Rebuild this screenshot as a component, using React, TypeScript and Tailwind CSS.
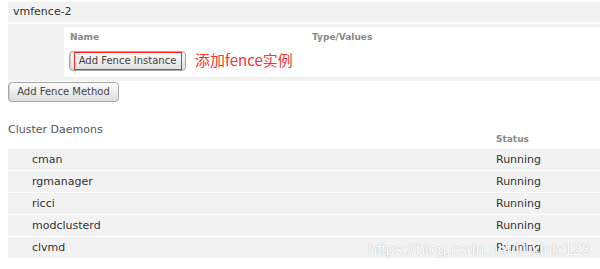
import React from "react";

const daemons = ["cman", "rgmanager", "ricci", "modclusterd", "clvmd"];

const btn =
  "relative h-[20px] rounded-[4px] border border-[#a8a8a8] bg-gradient-to-b from-[#fcfcfc] to-[#dedede] text-[10px] leading-[18px] text-[#444] shadow-[inset_1px_0_0_#cccccc]";

export default function App() {
  return (
    <div
      className="relative h-[269px] w-[600px] overflow-hidden bg-white pl-[8px] pt-[2px]"
      style={{ fontFamily: '"DejaVu Sans", sans-serif' }}
    >
      <div className="flex h-[20px] items-center bg-[#f2f2f2] pl-[5px] text-[11px] leading-[20px] text-[#333]">
        vmfence-2
      </div>
      <div className="mt-[2px] h-[57px] bg-[#f2f2f2] pl-[56px] pt-[3px]">
        <div className="h-[50px] bg-white">
          <div className="flex h-[17px] pt-[3px] text-[9px] font-bold leading-[14px] text-[#888]">
            <div className="w-[248px] pl-[6px]">Name</div>
            <div>Type/Values</div>
          </div>
          <div className="mt-[7px] flex items-center pl-[5px]">
            <button className={btn + " w-[117px]"}>
              Add Fence Instance
              <span className="pointer-events-none absolute left-[4px] right-[3px] top-0 bottom-0 border border-[#ff2020]" />
            </button>
            <span
              className="ml-[9px] -mt-[3px] text-[15px] leading-[20px] text-[#ff3030]"
              style={{ fontFamily: '"Noto Sans CJK SC", "Noto Sans", sans-serif' }}
            >
              添加fence实例
            </span>
          </div>
        </div>
      </div>
      <div className="mt-[1px] flex">
        <button className={btn + " w-[111px]"}>Add Fence Method</button>
      </div>
      <div className="mt-[20px] grid h-[22px] grid-cols-[488px_1fr]">
        <div className="self-start text-[11px] leading-[16px] text-[#555]">Cluster Daemons</div>
        <div className="self-end text-[9px] font-bold leading-[10px] text-[#888]">Status</div>
      </div>
      <div className="mt-[5px] flex flex-col gap-[1px]">
        {daemons.map((d) => (
          <div
            key={d}
            className="grid h-[21px] grid-cols-[488px_1fr] bg-[#f2f2f2] text-[11px] leading-[21px] text-[#333]"
          >
            <div className="pl-[24px]">{d}</div>
            <div>Running</div>
          </div>
        ))}
      </div>
      <div
        className="pointer-events-none absolute left-[368px] top-[241px] text-[16px] leading-[18px] text-white [text-shadow:0_0_1px_#a0a0a0]"
        style={{ fontFamily: '"Liberation Sans", Arial, sans-serif' }}
      >
        https://blog.csdn.net/liuxinlx123
      </div>
    </div>
  );
}
